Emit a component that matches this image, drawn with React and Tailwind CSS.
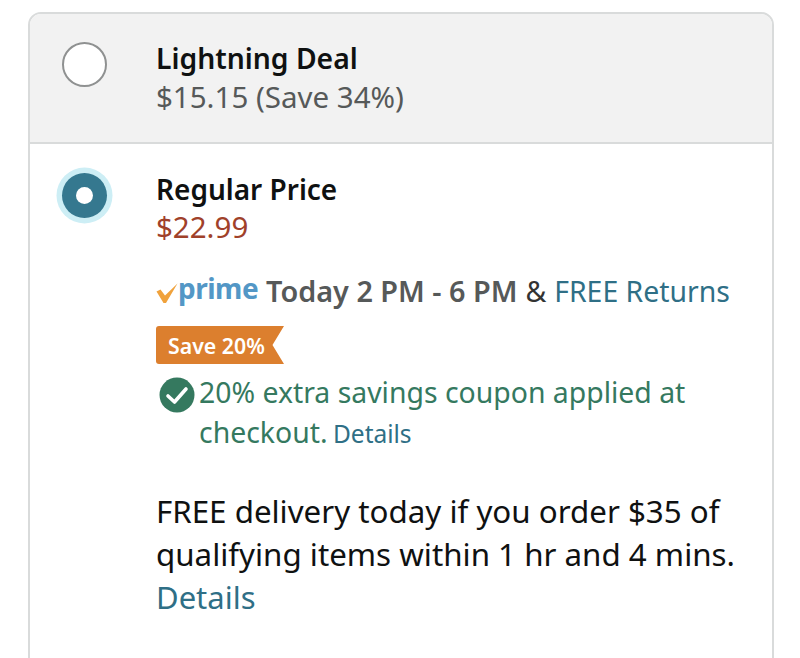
export default function App() {
  return (
    <div className="h-[658px] w-[800px] overflow-hidden bg-white pl-[28px] pr-[26px] pt-[12px] font-['Noto_Sans',sans-serif] text-[#0f1111]">
      <div className="h-[660px] rounded-t-[13px] border-2 border-[#d9dbdb]">
        {/* Lightning deal option */}
        <div className="flex h-[130px] rounded-t-[11px] border-b-2 border-[#d9dbdb] bg-[#f2f2f2] pl-[32px] pt-[28px]">
          <div className="h-[45px] w-[45px] rounded-full border-2 border-[#8f9191] bg-white" />
          <div className="ml-[49px]">
            <p className="mt-[-2px] text-[28.3px] font-semibold leading-[36px]">Lightning Deal</p>
            <p className="mt-[2px] text-[29.5px] leading-[38px] text-[#565959]">$15.15 (Save 34%)</p>
          </div>
        </div>

        {/* Regular price option */}
        <div className="flex pl-[32px] pt-[28px]">
          <div className="mt-[1px] flex h-[45px] w-[45px] shrink-0 items-center justify-center rounded-full bg-[#35788f] shadow-[0_0_0_5.5px_#cdeef5]">
            <div className="h-[17px] w-[17px] rounded-full bg-white" />
          </div>
          <div className="ml-[49px]">
            <p className="mt-[-1px] text-[28px] font-semibold leading-[36px]">Regular Price</p>
            <p className="mt-[1px] text-[29.5px] leading-[38px] text-[#a0412a]">$22.99</p>

            <div className="mt-[25px] flex h-[40px] items-center whitespace-nowrap text-[28.4px]">
              <svg width="22" height="21" viewBox="0 0 22 21" className="mt-[5px]">
                <path d="M0.5 8.5 L4.5 6.5 L9 12.5 L21.5 0.5 L10 20 L7.5 20 Z" fill="#f0a23c" />
              </svg>
              <span className="mt-[-7px] text-[28px] font-bold leading-none tracking-[-0.5px] text-[#5397c6]">prime</span>
              <span className="ml-[8px] text-[28.8px] font-semibold text-[#565959]">Today 2 PM - 6 PM</span>
              <span className="ml-[8px] text-[#333]">&amp;</span>
              <span className="ml-[8px] text-[#2f6f86]">FREE Returns</span>
            </div>

            <div className="mt-[15px] flex">
              <div className="flex h-[38px] w-[128px] items-center rounded-l-[3px] bg-[#dc7f2e] pl-[12px] pt-[1px] text-[21.3px] font-semibold text-white [clip-path:polygon(0_0,100%_0,91%_50%,100%_100%,0_100%)]">
                Save 20%
              </div>
            </div>

            <div className="ml-[3px] mt-[8px] flex">
              <svg width="36" height="36" viewBox="0 0 36 36" className="mt-[5px] shrink-0">
                <circle cx="18" cy="18" r="17.5" fill="#35795f" />
                <path d="M9 19 L15.5 25 L27 12" fill="none" stroke="white" strokeWidth="3.6" strokeLinecap="round" strokeLinejoin="round" />
              </svg>
              <p className="ml-[4px] w-[530px] text-[28.4px] leading-[40px] text-[#35795f]">
                20% extra savings coupon applied at checkout. <span className="ml-[-2px] text-[24.5px] text-[#2f6f86]">Details</span>
              </p>
            </div>

            <p className="mt-[36px] w-[590px] text-[31.3px] leading-[43px]">
              FREE delivery today if you order $35 of qualifying items within 1 hr and 4 mins.
              <span className="block text-[31px] text-[#2f6f86]">Details</span>
            </p>
          </div>
        </div>
      </div>
    </div>
  );
}
